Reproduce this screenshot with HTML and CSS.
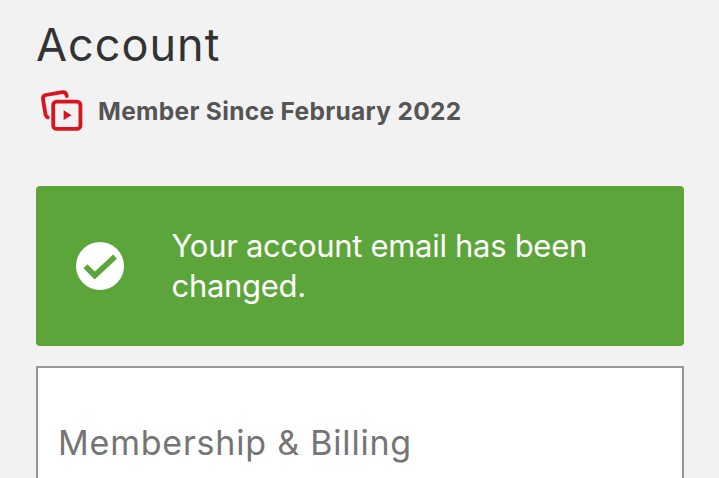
FILE: index.html
```html
<!DOCTYPE html>
<html lang="en">
<head>
<meta charset="utf-8">
<title>Account</title>
<link rel="stylesheet" href="styles.css">
</head>
<body>
<main class="account">
  <h1 class="title">Account</h1>
  <div class="member">
    <svg class="member-icon" viewBox="0 0 44 44" fill="none" stroke="#d9141e" stroke-width="3.8" stroke-linecap="round" stroke-linejoin="round">
      <path d="M7.800 28.400Q6 27.800 5.500 25.400L3 10.500Q2.400 6.800 5.800 6L22.500 3.200Q26 2.800 26.800 7"/>
      <rect x="13.200" y="12.600" width="27.200" height="27.200" rx="3.400"/>
      <path d="M23.600 21.300v9.800l8-4.900z" fill="#d9141e" stroke="none"/>
    </svg>
    <span class="member-text">Member Since February 2022</span>
  </div>
  <section class="alert">
    <svg class="alert-icon" viewBox="0 0 48 48">
      <circle cx="24" cy="24" r="24" fill="#fff"/>
      <path d="M9.500 24.300l9.200 9.200 20.300-18.900" fill="none" stroke="#5ba53a" stroke-width="5.600"/>
    </svg>
    <p class="alert-text">Your account email has been changed.</p>
  </section>
  <section class="card">
    <h2 class="card-title">Membership &amp; Billing</h2>
  </section>
</main>
</body>
</html>
```

FILE: styles.css
```css
* { box-sizing: border-box; }
html { overflow: hidden; }
body { margin: 0; background: #f2f2f2; font-family: Inter, "Liberation Sans", sans-serif; }
.account { height: 478px; padding: 18px 35px 0 36px; overflow: hidden; }
.title { margin: 0; font-size: 45px; line-height: 54px; font-weight: 400; letter-spacing: 1px; color: #333; }
.member { display: flex; align-items: center; gap: 14px; height: 44px; margin: 17px 0 53px 4px; }
.member-icon { width: 44px; height: 44px; flex: none; }
.member-text { font-size: 24.500px; font-weight: 700; letter-spacing: 0.32px; color: #555; white-space: nowrap; }
.alert { display: flex; align-items: center; height: 160px; padding: 0 70px 0 39.500px; gap: 48px; background: #5ba53a; border-radius: 4px; }
.alert-icon { width: 48px; height: 48px; flex: none; }
.alert-text { margin: 0; font-size: 31px; line-height: 40px; letter-spacing: -0.3px; color: #fff; }
.card { height: 200px; margin-top: 20px; padding: 54px 20px; background: #fff; border: 2px solid #999; }
.card-title { margin: 0; font-size: 34px; line-height: 41px; font-weight: 400; letter-spacing: 0.8px; color: #757575; white-space: nowrap; }
```
